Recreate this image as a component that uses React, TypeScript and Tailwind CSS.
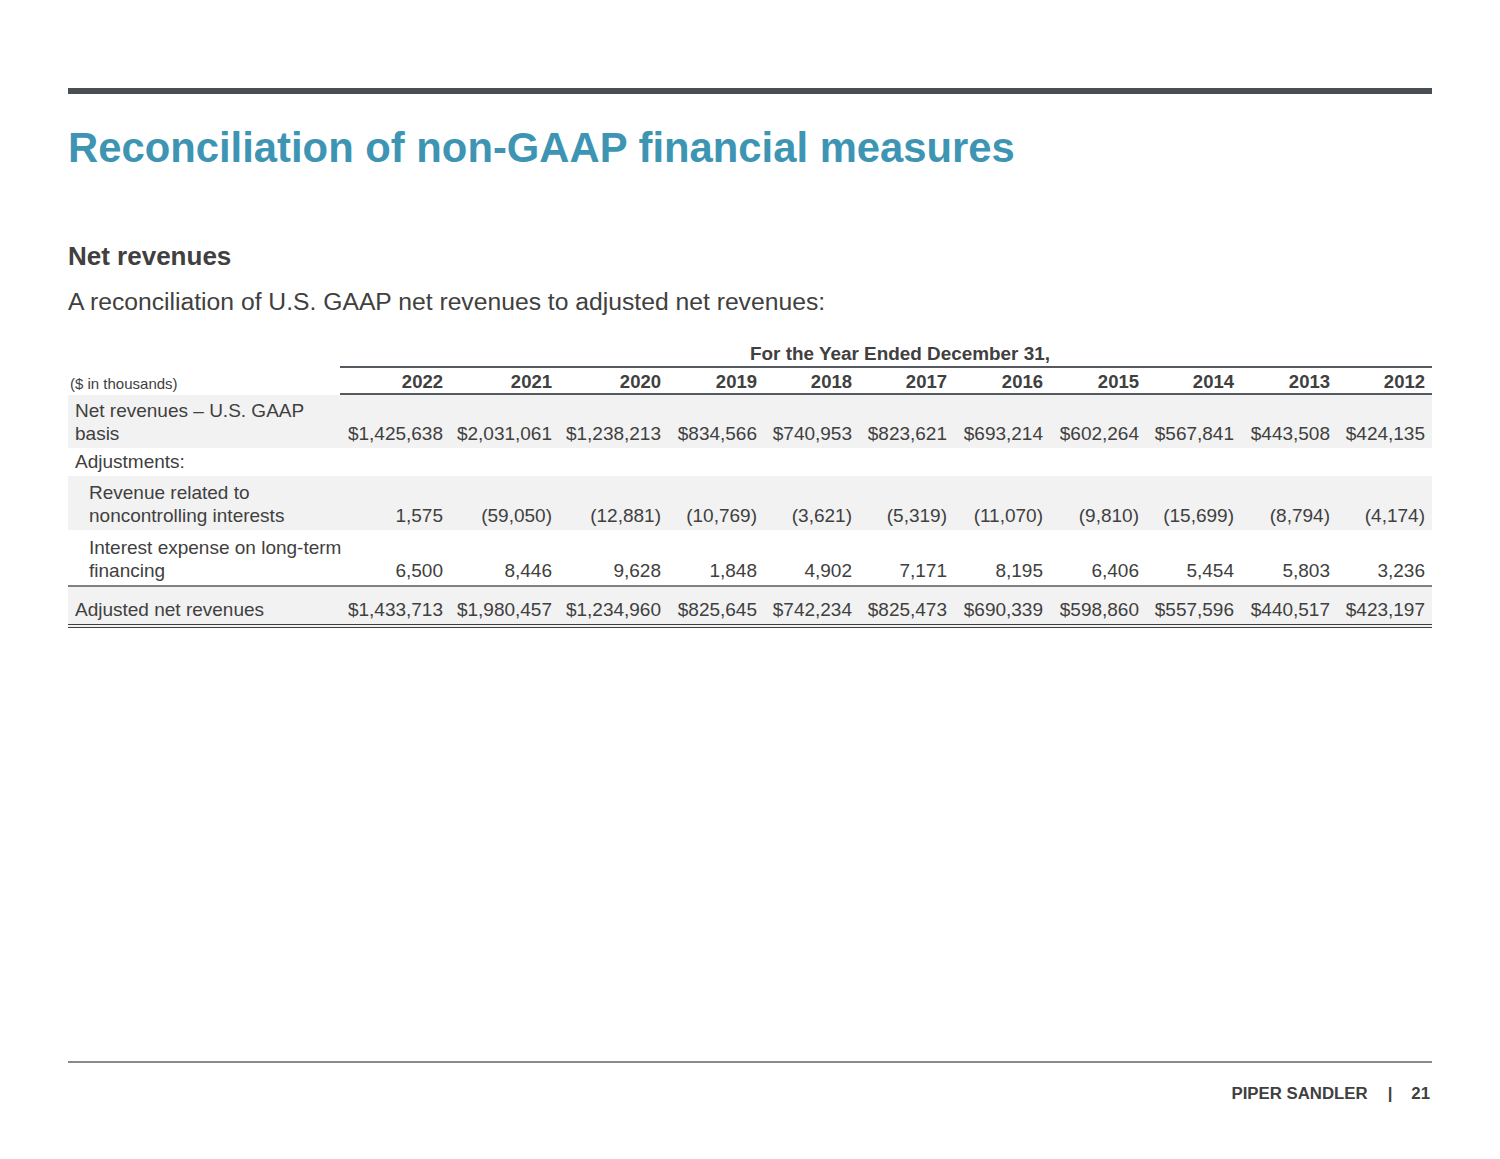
const years = ["2022", "2021", "2020", "2019", "2018", "2017", "2016", "2015", "2014", "2013", "2012"]
const colWidths = ["w-[110px]", "w-[109px]", "w-[109px]", "w-[96px]", "w-[95px]", "w-[95px]", "w-[96px]", "w-[96px]", "w-[95px]", "w-[96px]", "w-[95px]"]

type Row = {
  label: React.ReactNode
  values: string[]
  indent?: boolean
  shaded?: boolean
  pad: string
  border?: string
}

const rows: Row[] = [
  {
    label: <>Net revenues – U.S. GAAP<br />basis</>,
    values: ["$1,425,638", "$2,031,061", "$1,238,213", "$834,566", "$740,953", "$823,621", "$693,214", "$602,264", "$567,841", "$443,508", "$424,135"],
    shaded: true,
    pad: "pt-[4px] pb-[3px]",
  },
  {
    label: "Adjustments:",
    values: Array(11).fill(""),
    pad: "pt-[2px] pb-[3px]",
  },
  {
    label: <>Revenue related to<br />noncontrolling interests</>,
    values: ["1,575", "(59,050)", "(12,881)", "(10,769)", "(3,621)", "(5,319)", "(11,070)", "(9,810)", "(15,699)", "(8,794)", "(4,174)"],
    indent: true,
    shaded: true,
    pad: "pt-[5px] pb-[3px]",
  },
  {
    label: <>Interest expense on long-term<br />financing</>,
    values: ["6,500", "8,446", "9,628", "1,848", "4,902", "7,171", "8,195", "6,406", "5,454", "5,803", "3,236"],
    indent: true,
    pad: "pt-[6px] pb-[3px]",
    border: "border-b-2 border-[#808080]",
  },
  {
    label: "Adjusted net revenues",
    values: ["$1,433,713", "$1,980,457", "$1,234,960", "$825,645", "$742,234", "$825,473", "$690,339", "$598,860", "$557,596", "$440,517", "$423,197"],
    shaded: true,
    pad: "pt-[11px] pb-[3px]",
    border: "border-b-4 border-double border-[#404040]",
  },
]

export default function App() {
  return (
    <div
      className="h-[1159px] bg-white px-[68px] flex flex-col text-[#404040]"
      style={{ fontFamily: '"Liberation Sans", Arial, sans-serif' }}
    >
      <div className="mt-[88px] h-[6px] bg-[#4a4f55]" />

      <h1 className="mt-[33px] text-[41.8px] leading-none font-bold text-[#3e95b3]">
        Reconciliation of non-GAAP financial measures
      </h1>

      <h2 className="mt-[74px] text-[26px] leading-none font-bold">Net revenues</h2>
      <p className="mt-[21px] text-[24.7px] leading-none">
        A reconciliation of U.S. GAAP net revenues to adjusted net revenues:
      </p>

      <table className="mt-[25px] w-[1364px] table-fixed border-separate border-spacing-0 whitespace-nowrap">
        <colgroup>
          <col className="w-[272px]" />
          {colWidths.map((w, i) => (
            <col key={i} className={w} />
          ))}
        </colgroup>
        <thead>
          <tr>
            <th />
            <th
              colSpan={11}
              className="pl-[28px] pt-[3px] pb-[1px] text-center text-[18.9px] leading-[22px] font-bold border-b-2 border-[#555a60]"
            >
              For the Year Ended December 31,
            </th>
          </tr>
          <tr>
            <th className="pl-[2px] pb-[0px] text-left align-bottom text-[15px] leading-[22px] font-normal">
              ($ in thousands)
            </th>
            {years.map((y) => (
              <th
                key={y}
                className="pt-[3px] pr-[7px] text-right text-[18.5px] leading-[22px] font-bold border-b-2 border-[#555a60]"
              >
                {y}
              </th>
            ))}
          </tr>
        </thead>
        <tbody className="text-[19px] leading-[23px]">
          {rows.map((r, i) => (
            <tr key={i} className={r.shaded ? "bg-[#f2f2f2]" : ""}>
              <td className={`${r.pad} ${r.indent ? "pl-[21px]" : "pl-[7px]"} align-top ${r.border ?? ""}`}>
                {r.label}
              </td>
              {r.values.map((v, j) => (
                <td key={j} className={`${r.pad} pr-[7px] text-right align-bottom ${r.border ?? ""}`}>
                  {v}
                </td>
              ))}
            </tr>
          ))}
        </tbody>
      </table>

      <div className="flex-1" />

      <div className="h-[2px] bg-[#8a8a8a]" />
      <div className="mt-[21px] mb-[55px] flex justify-end pr-[2px] text-[16.8px] leading-[20px] font-bold">
        <span>PIPER SANDLER</span>
        <span className="ml-[20px]">|</span>
        <span className="ml-[19px]">21</span>
      </div>
    </div>
  )
}
